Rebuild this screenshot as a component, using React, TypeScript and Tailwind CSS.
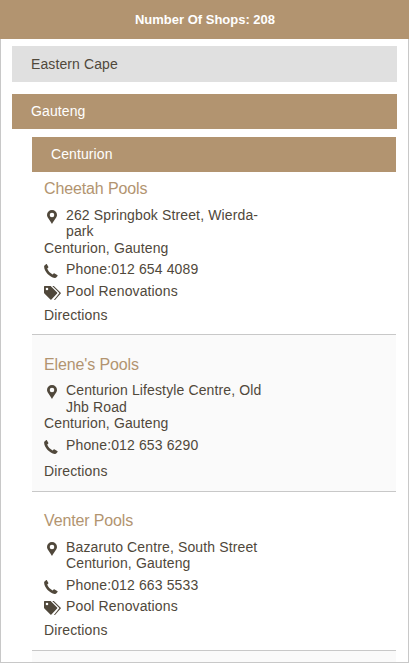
import React from "react";

type Shop = {
  name: string;
  address: string[];
  area?: string;
  phone: string;
  tag?: string;
  card: string;
  addressLine: string;
  addressGap: string;
  phoneGap: string;
  tagGap: string;
  directionsGap: string;
};

const shops: Shop[] = [
  {
    name: "Cheetah Pools",
    address: ["262 Springbok Street, Wierda-", "park"],
    area: "Centurion, Gauteng",
    phone: "012 654 4089",
    tag: "Pool Renovations",
    card: "h-[163px] pt-[7px]",
    addressLine: "h-4 last:h-[17px]",
    addressGap: "mt-[8px]",
    phoneGap: "mt-[5px]",
    tagGap: "mt-[6px]",
    directionsGap: "mt-[8px]",
  },
  {
    name: "Elene's Pools",
    address: ["Centurion Lifestyle Centre, Old", "Jhb Road"],
    area: "Centurion, Gauteng",
    phone: "012 653 6290",
    card: "h-[157px] bg-[#fafafa] pt-[20px]",
    addressLine: "h-[17px] last:h-4",
    addressGap: "mt-[7px]",
    phoneGap: "mt-[6px]",
    tagGap: "",
    directionsGap: "mt-[10px]",
  },
  {
    name: "Venter Pools",
    address: ["Bazaruto Centre, South Street", "Centurion, Gauteng"],
    phone: "012 663 5533",
    tag: "Pool Renovations",
    card: "h-[159px] pt-[19px]",
    addressLine: "h-4",
    addressGap: "mt-[8px]",
    phoneGap: "mt-[6px]",
    tagGap: "mt-[5px]",
    directionsGap: "mt-[8px]",
  },
];

function Pin() {
  return (
    <svg className="mt-[3px] ml-[2.500px] h-[14px] w-[10px] shrink-0" viewBox="0 0 10 14" fill="currentColor">
      <path fillRule="evenodd" d="M5 0a5 5 0 0 1 5 5c0 2.800-3.200 5.200-5 9C3.200 10.200 0 7.800 0 5a5 5 0 0 1 5-5Zm0 2.700a2.300 2.300 0 1 0 0 4.600 2.300 2.300 0 0 0 0-4.600Z" />
    </svg>
  );
}

function Phone() {
  return (
    <svg className="mt-[3px] h-[14px] w-[14px] shrink-0" viewBox="0 0 14 14" fill="currentColor">
      <path d="M.5 1.500 2 .2c.4-.3.8-.2 1 .2l1.300 2.400c.2.400.1.800-.2 1l-.9.700c.8 2.400 3 4.800 5.500 5.900l.9-.9c.3-.3.700-.3 1-.1l2.600 1.500c.5.300.6.700.3 1.100l-1.300 1.500c-.4.400-.9.500-1.500.4C5.500 13.100.5 7.700.1 2.700c0-.5.1-.9.400-1.200Z" />
    </svg>
  );
}

function Tags() {
  return (
    <svg className="mt-[3px] h-[14px] w-[17px] shrink-0" viewBox="0 0 17 14" fill="currentColor">
      <path fillRule="evenodd" d="M.6 0h5.600c.4 0 .7.100.9.400l6 6.200c.3.300.3.700 0 1l-5.700 6c-.3.300-.7.300-1 0L.400 7.500C.1 7.200 0 6.900 0 6.500V.7C0 .3.200 0 .6 0ZM3 1.700a1.300 1.300 0 1 0 0 2.600 1.300 1.300 0 0 0 0-2.600Z" />
      <path d="M8.300 0h1c.4 0 .7.100 1 .4l6.400 6.300c.3.300.3.600 0 .9l-5.500 6.100c-.4.300-.8.400-1.300.2l5.200-6.400c.2-.2.200-.5 0-.7Z" />
    </svg>
  );
}

function Row({ icon, gap, children }: { icon: React.ReactNode; gap: string; children: React.ReactNode }) {
  return (
    <div className={"flex " + gap}>
      <div className="h-4 w-[22px] shrink-0">{icon}</div>
      <div>{children}</div>
    </div>
  );
}

function ShopCard({ shop }: { shop: Shop }) {
  return (
    <article className={"border-b border-[#c8c8c8] pl-3 text-sm leading-4 tracking-[0.13px] " + shop.card}>
      <h3 className="text-base leading-5 tracking-[-0.13px] text-[#b29470]">{shop.name}</h3>
      <Row icon={<Pin />} gap={shop.addressGap}>
        {shop.address.map((line) => (
          <div key={line} className={shop.addressLine}>{line}</div>
        ))}
      </Row>
      {shop.area && <div>{shop.area}</div>}
      <Row icon={<Phone />} gap={shop.phoneGap}>Phone:{shop.phone}</Row>
      {shop.tag && <Row icon={<Tags />} gap={shop.tagGap}>{shop.tag}</Row>}
      <div className={shop.directionsGap}>Directions</div>
    </article>
  );
}

export default function App() {
  return (
    <div className="flex h-[663px] w-[409px] flex-col overflow-hidden bg-white font-['Liberation_Sans',Arial,sans-serif] text-[#50483b]">
      <header className="h-[39px] shrink-0 bg-[#b29470] pl-px text-center text-[13px] leading-[39px] font-bold text-white">
        Number Of Shops: 208
      </header>
      <main className="min-h-0 flex-1 overflow-hidden border-x border-b border-[#c8c8c8] px-[11px] pt-[7px] tracking-[0.1px]">
        <div className="h-9 bg-[#e0e0e0] pl-[19px] text-sm leading-9">Eastern Cape</div>
        <div className="mt-3 h-[35px] bg-[#b29470] pl-[19px] text-sm leading-[35px] text-white">Gauteng</div>
        <section className="mt-2 mr-px ml-5">
          <div className="h-[35px] bg-[#b29470] pl-[19px] text-sm leading-[35px] text-white">Centurion</div>
          {shops.map((shop) => (
            <ShopCard key={shop.name} shop={shop} />
          ))}
          <div className="h-[60px] bg-[#fafafa]" />
        </section>
      </main>
    </div>
  );
}
